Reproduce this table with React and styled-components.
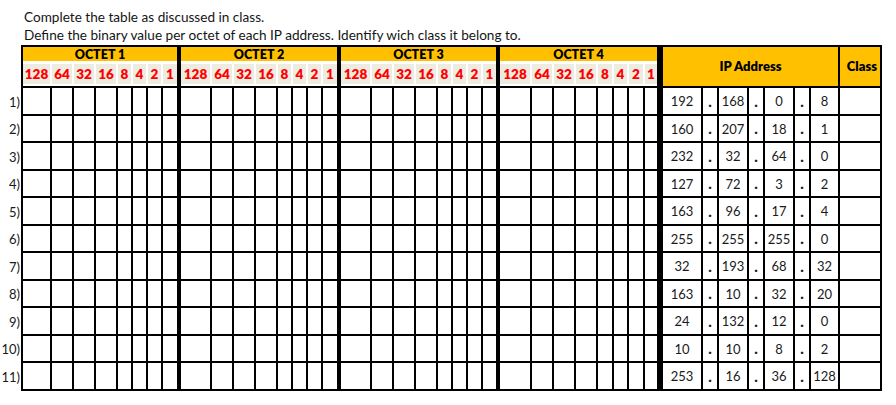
import React from "react";
import styled, { createGlobalStyle } from "styled-components";

const FONT = `Lato, "Liberation Sans", sans-serif`;

const GlobalStyle = createGlobalStyle`
  body {
    margin: 0;
    background: #fff;
    font-family: ${FONT};
    color: #111;
  }
`;

// widths of every bit column (border-box, right border included)
const octetWidths = [
  [31, 22, 22, 22, 15, 15, 15, 18],
  [31, 22, 22, 22, 15, 15, 15, 18],
  [31, 22, 22, 22, 15, 15, 15, 17],
  [32, 22, 22, 22, 16, 15, 16, 18],
];
const sepWidths = [4, 4, 4, 6];
const ipWidths = [40, 16, 30, 16, 30, 16, 29, 42];
const bits = [128, 64, 32, 16, 8, 4, 2, 1];

const ips = [
  [192, 168, 0, 8],
  [160, 207, 18, 1],
  [232, 32, 64, 0],
  [127, 72, 3, 2],
  [163, 96, 17, 4],
  [255, 255, 255, 0],
  [32, 193, 68, 32],
  [163, 10, 32, 20],
  [24, 132, 12, 0],
  [10, 10, 8, 2],
  [253, 16, 36, 128],
];

const columns = ["21px"]
  .concat(octetWidths.flat().map((w) => `${w}px`))
  .concat(ipWidths.map((w) => `${w}px`))
  .join(" ");

const Page = styled.div`
  padding-top: 8px;
`;

const Intro = styled.div`
  margin-left: 24px;
  font-size: 13.6px;
  line-height: 18px;
  color: #151515;
`;

const Sheet = styled.div`
  display: grid;
  grid-template-columns: ${(p) => p.$cols};
  grid-template-rows: 19px 24px repeat(11, 27.5px);
  width: max-content;
  margin-top: 1px;
`;

const Cell = styled.div`
  box-sizing: border-box;
  display: flex;
  align-items: center;
  justify-content: center;
  overflow: hidden;
  white-space: nowrap;
`;

const Label = styled(Cell)`
  grid-column: 1;
  justify-content: flex-end;
  padding-right: 1px;
  font-size: 13px;
  color: #1a1a1a;
`;

const OctetHead = styled(Cell)`
  grid-column: span 8;
  background: #ffc000;
  border-top: 2px solid #000;
  border-left: ${(p) => (p.$first ? "2px solid #000" : "0")};
  border-right: ${(p) => p.$sep}px solid #000;
  box-shadow: inset 0 -3px 0 #fff;
  padding-bottom: 3px;
  font-size: 12.5px;
  font-weight: 800;
  color: #000;
`;

const BitCell = styled(Cell)`
  background: #eeece1;
  border-left: ${(p) => (p.$first ? "2px solid #000" : "0")};
  border-right: ${(p) => (p.$sep ? `${p.$sep}px solid #000` : "0")};
  border-bottom: 2px solid #000;
  box-shadow: inset ${(p) => (p.$sep ? 0 : -2)}px -2px 0 #fff;
  padding: 0 ${(p) => (p.$sep ? 0 : 2)}px 2px 0;
  font-size: 13.5px;
  font-weight: 800;
  color: #ff0000;
`;

const IpHead = styled(Cell)`
  grid-column: span ${(p) => p.$span};
  grid-row: span 2;
  background: #ffc000;
  border-top: 2px solid #000;
  border-right: 2px solid #000;
  border-bottom: 2px solid #000;
  justify-content: ${(p) => (p.$span > 1 ? "center" : "flex-end")};
  padding-right: ${(p) => (p.$span > 1 ? 0 : 3)}px;
  padding-bottom: 2px;
  font-size: 13px;
  font-weight: 800;
  color: #000;
`;

const DataCell = styled(Cell)`
  background: #fff;
  border-left: ${(p) => (p.$first ? "2px solid #000" : "0")};
  border-right: ${(p) => p.$right}px solid #000;
  border-bottom: 2px solid #000;
  font-size: 13px;
  font-weight: ${(p) => (p.$dot ? 900 : 400)};
  color: #1a1a1a;
  padding-top: 1px;
`;

const Dot = styled.span`
  font-size: 15px;
  line-height: 1;
`;

function HeaderRows() {
  return (
    <>
      <Label />
      {octetWidths.map((_, i) => (
        <OctetHead key={i} $first={i === 0} $sep={sepWidths[i]}>
          OCTET {i + 1}
        </OctetHead>
      ))}
      <IpHead $span={7}>IP Address</IpHead>
      <IpHead $span={1}>Class</IpHead>

      <Label />
      {octetWidths.map((_, o) =>
        bits.map((b, i) => (
          <BitCell
            key={`${o}-${b}`}
            $first={o === 0 && i === 0}
            $sep={i === 7 ? sepWidths[o] : 0}
          >
            {b}
          </BitCell>
        ))
      )}
    </>
  );
}

function DataRow({ index, ip }) {
  const ipCells = [];
  ip.forEach((v, i) => {
    ipCells.push(
      <DataCell key={`v${i}`} $right={2}>
        {v}
      </DataCell>
    );
    if (i < 3)
      ipCells.push(
        <DataCell key={`d${i}`} $right={2} $dot>
          <Dot>.</Dot>
        </DataCell>
      );
  });

  return (
    <>
      <Label>{index})</Label>
      {octetWidths.map((_, o) =>
        bits.map((b, i) => (
          <DataCell
            key={`${o}-${b}`}
            $first={o === 0 && i === 0}
            $right={i === 7 ? sepWidths[o] : 2}
          />
        ))
      )}
      {ipCells}
      <DataCell $right={2} />
    </>
  );
}

export default function App() {
  return (
    <Page>
      <GlobalStyle />
      <Intro>
        <div>Complete the table as discussed in class.</div>
        <div>
          Define the binary value per octet of each IP address. Identify wich class it belong to.
        </div>
      </Intro>
      <Sheet $cols={columns}>
        <HeaderRows />
        {ips.map((ip, i) => (
          <DataRow key={i} index={i + 1} ip={ip} />
        ))}
      </Sheet>
    </Page>
  );
}
